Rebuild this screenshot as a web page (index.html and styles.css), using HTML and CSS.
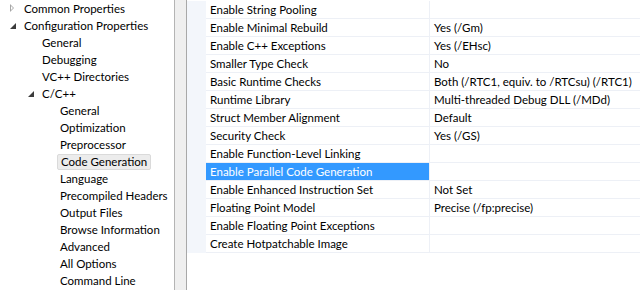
FILE: index.html
```html
<!DOCTYPE html>
<html lang="en">
<head>
  <meta charset="UTF-8">
  <title>Property Pages</title>
  <link rel="stylesheet" href="styles.css">
</head>
<body>
  <div class="tree">
    <div class="node lvl1"><span class="arrow collapsed"></span>Common Properties</div>
    <div class="node lvl1"><span class="arrow expanded"></span>Configuration Properties</div>
    <div class="node lvl2">General</div>
    <div class="node lvl2">Debugging</div>
    <div class="node lvl2">VC++ Directories</div>
    <div class="node lvl2"><span class="arrow expanded"></span>C/C++</div>
    <div class="node lvl3">General</div>
    <div class="node lvl3">Optimization</div>
    <div class="node lvl3">Preprocessor</div>
    <div class="node lvl3"><span class="current">Code Generation</span></div>
    <div class="node lvl3">Language</div>
    <div class="node lvl3">Precompiled Headers</div>
    <div class="node lvl3">Output Files</div>
    <div class="node lvl3">Browse Information</div>
    <div class="node lvl3">Advanced</div>
    <div class="node lvl3">All Options</div>
    <div class="node lvl3">Command Line</div>
  </div>

  <div class="splitter"></div>

  <div class="grid">
    <div class="row"><div class="gutter"></div><div class="name">Enable String Pooling</div><div class="value"></div></div>
    <div class="row"><div class="gutter"></div><div class="name">Enable Minimal Rebuild</div><div class="value">Yes (/Gm)</div></div>
    <div class="row"><div class="gutter"></div><div class="name">Enable C++ Exceptions</div><div class="value">Yes (/EHsc)</div></div>
    <div class="row"><div class="gutter"></div><div class="name">Smaller Type Check</div><div class="value">No</div></div>
    <div class="row"><div class="gutter"></div><div class="name">Basic Runtime Checks</div><div class="value">Both (/RTC1, equiv. to /RTCsu) (/RTC1)</div></div>
    <div class="row"><div class="gutter"></div><div class="name">Runtime Library</div><div class="value">Multi-threaded Debug DLL (/MDd)</div></div>
    <div class="row"><div class="gutter"></div><div class="name">Struct Member Alignment</div><div class="value">Default</div></div>
    <div class="row"><div class="gutter"></div><div class="name">Security Check</div><div class="value">Yes (/GS)</div></div>
    <div class="row"><div class="gutter"></div><div class="name">Enable Function-Level Linking</div><div class="value"></div></div>
    <div class="row selected"><div class="gutter"></div><div class="name">Enable Parallel Code Generation</div><div class="value"></div></div>
    <div class="row"><div class="gutter"></div><div class="name">Enable Enhanced Instruction Set</div><div class="value">Not Set</div></div>
    <div class="row"><div class="gutter"></div><div class="name">Floating Point Model</div><div class="value">Precise (/fp:precise)</div></div>
    <div class="row"><div class="gutter"></div><div class="name">Enable Floating Point Exceptions</div><div class="value"></div></div>
    <div class="row"><div class="gutter"></div><div class="name">Create Hotpatchable Image</div><div class="value"></div></div>
  </div>
</body>
</html>
```

FILE: styles.css
```css
html, body {
  margin: 0;
  padding: 0;
  width: 640px;
  height: 290px;
  overflow: hidden;
}

body {
  display: flex;
  background: #ffffff;
  color: #000000;
  font-family: Lato, "Open Sans", sans-serif;
  font-size: 11.5px;
}

.tree {
  width: 174px;
  flex-shrink: 0;
  display: flex;
  flex-direction: column;
}

.node {
  height: 17px;
  line-height: 17px;
  white-space: nowrap;
  position: relative;
}

.lvl1 {
  padding-left: 24px;
}

.lvl2 {
  padding-left: 42px;
}

.lvl3 {
  padding-left: 60px;
}

.arrow {
  position: absolute;
  top: 5px;
  width: 0;
  height: 0;
}

.lvl1 .arrow {
  left: 10px;
}

.lvl2 .arrow {
  left: 28px;
}

.arrow.collapsed {
  top: 4px;
  border-top: 4px solid transparent;
  border-bottom: 4px solid transparent;
  border-left: 4px solid #a6a6a6;
}

.arrow.collapsed::after {
  content: "";
  position: absolute;
  left: -3px;
  top: -2px;
  border-top: 2px solid transparent;
  border-bottom: 2px solid transparent;
  border-left: 2px solid #ffffff;
}

.arrow.expanded {
  top: 6px;
  border-left: 6px solid transparent;
  border-bottom: 6px solid #3c3c3c;
}

.current {
  display: inline-block;
  box-sizing: border-box;
  height: 16px;
  line-height: 14px;
  margin-top: 1px;
  margin-left: -3px;
  padding: 0 3px;
  background: #ececec;
  border: 1px solid #dadada;
  border-radius: 2px;
}

.splitter {
  width: 11px;
  flex-shrink: 0;
  background: #efefef;
  border-left: 1px solid #b4b4b4;
  border-right: 1px solid #a8a8a8;
}

.grid {
  flex: 1;
  display: flex;
  flex-direction: column;
  padding-top: 1px;
}

.row {
  display: grid;
  grid-template-columns: 19px 224px 1fr;
  height: 18px;
}

.gutter {
  background: #f3f6fb;
}

.name, .value {
  line-height: 17px;
  border-bottom: 1px solid #edf0f6;
  padding-left: 4px;
  white-space: nowrap;
  overflow: hidden;
}

.name {
  border-right: 1px solid #edf0f6;
}

.selected .name {
  background: #3399ff;
  color: #ffffff;
}
```
